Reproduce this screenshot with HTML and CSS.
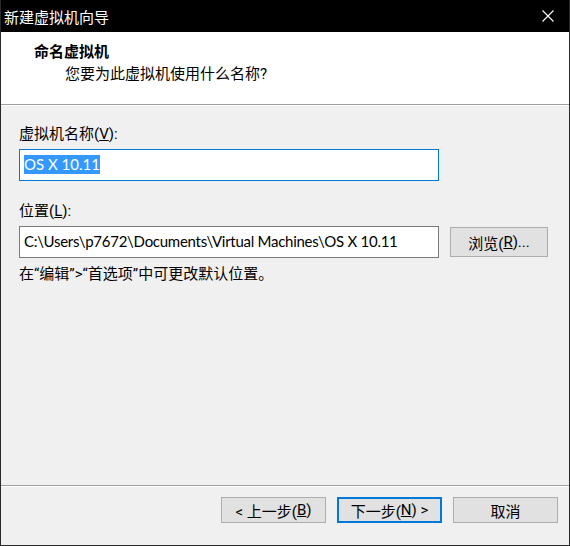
FILE: index.html
```html
<!DOCTYPE html>
<html lang="zh-CN">
<head>
<meta charset="utf-8">
<title>新建虚拟机向导</title>
<link rel="stylesheet" href="styles.css">
</head>
<body>
<div class="window">
  <div class="titlebar">
    <span class="title">新建虚拟机向导</span>
    <span class="close">
      <svg width="12" height="12" viewBox="0 0 12 12"><path d="M0.5 0.5 L11.5 11.5 M11.5 0.5 L0.5 11.5" stroke="#fff" stroke-width="1.1" fill="none"/></svg>
    </span>
  </div>
  <div class="header">
    <div class="header-title">命名虚拟机</div>
    <div class="header-sub">您要为此虚拟机使用什么名称?</div>
  </div>
  <div class="content">
    <div class="label">虚拟机名称(<u>V</u>):</div>
    <div class="field field-focus"><span class="selected">OS X 10.11</span></div>
    <div class="label label-gap">位置(<u>L</u>):</div>
    <div class="row">
      <div class="field field-path">C:\Users\p7672\Documents\Virtual Machines\OS X 10.11</div>
      <div class="button browse">浏览(<u>R</u>)...</div>
    </div>
    <div class="hint">在“编辑”&gt;“首选项”中可更改默认位置。</div>
  </div>
  <div class="footer">
    <div class="button nav">&lt; 上一步(<u>B</u>)</div>
    <div class="button nav default">下一步(<u>N</u>) &gt;</div>
    <div class="button nav cancel">取消</div>
  </div>
</div>
</body>
</html>
```
FILE: styles.css
```css
html, body {
  margin: 0;
  padding: 0;
}

body {
  font-family: Roboto, "Noto Sans CJK SC", sans-serif;
  font-size: 15px;
  color: #000;
  background: #f0f0f0;
}

.window {
  width: 570px;
  height: 546px;
  box-sizing: border-box;
  border: 1px solid #2a2a2a;
  border-top: none;
  display: flex;
  flex-direction: column;
  background: #f0f0f0;
}

.titlebar {
  height: 32px;
  flex: none;
  background: #000;
  color: #fff;
  display: flex;
  align-items: center;
  justify-content: space-between;
  padding: 0 15px 0 3px;
}

.title {
  font-family: "Noto Sans CJK SC", sans-serif;
  font-size: 15px;
  line-height: 1;
}

.close {
  display: flex;
}

.header {
  flex: none;
  height: 73px;
  background: #fff;
  border-bottom: 1px solid #a0a0a0;
  box-shadow: 0 1px 0 #fff;
  box-sizing: border-box;
  padding-top: 9px;
}

.header-title {
  font-family: "Noto Sans CJK SC", sans-serif;
  font-weight: bold;
  padding-left: 33px;
  line-height: 20px;
}

.header-sub {
  padding-left: 64px;
  margin-top: 3px;
  line-height: 20px;
}

.content {
  flex: 1;
  padding: 19px 0 0 18px;
}

.label {
  line-height: 20px;
  margin-bottom: 5px;
}

.label-gap {
  margin-top: 20px;
}

.field {
  width: 420px;
  height: 32px;
  box-sizing: border-box;
  border: 1px solid #7a7a7a;
  background: #fff;
  display: flex;
  align-items: center;
  padding-left: 4px;
  padding-bottom: 3px;
  white-space: nowrap;
  font-family: Lato, "Noto Sans CJK SC", sans-serif;
}

.field-focus {
  border-color: #0078d7;
  padding-bottom: 2px;
}

.field-path {
  letter-spacing: -0.27px;
}

.selected {
  background: #3399ff;
  color: #fff;
  line-height: 19px;
}

.row {
  display: flex;
  align-items: center;
  gap: 11px;
}

.button {
  box-sizing: border-box;
  background: #e1e1e1;
  border: 1px solid #adadad;
  display: flex;
  align-items: center;
  justify-content: center;
  white-space: nowrap;
}

.browse {
  width: 98px;
  height: 30px;
}

.hint {
  margin-top: 6px;
  line-height: 20px;
}

.footer {
  flex: none;
  height: 48px;
  border-top: 1px solid #a0a0a0;
  box-shadow: inset 0 1px 0 #fff;
  display: flex;
  align-items: flex-start;
  justify-content: flex-end;
  gap: 11px;
  padding: 11px 11px 0 0;
}

.nav {
  width: 105px;
  height: 26px;
}

.default {
  border: 2px solid #0078d7;
}
```
